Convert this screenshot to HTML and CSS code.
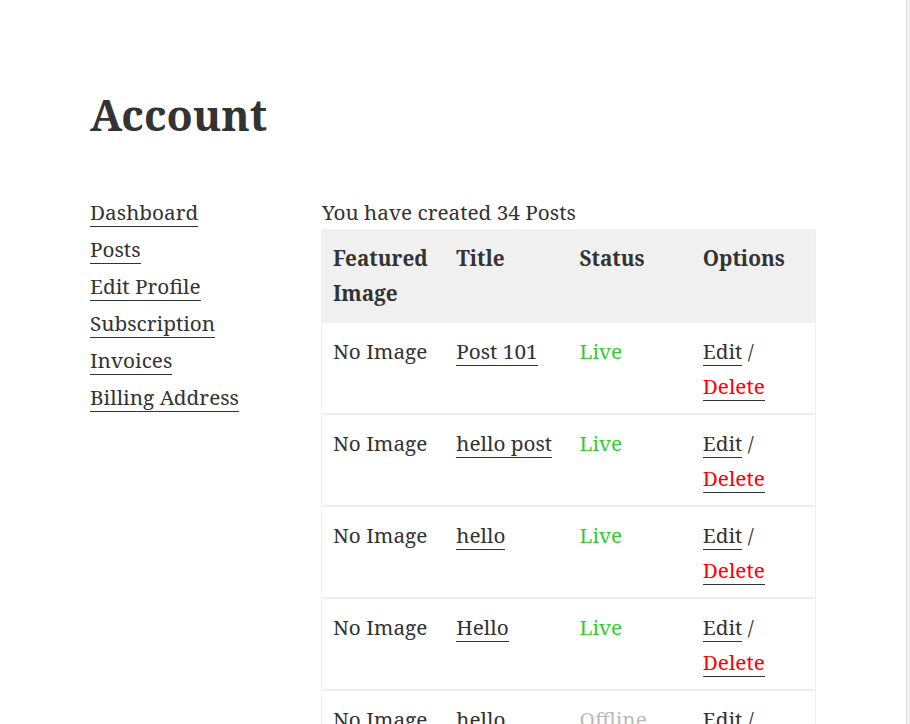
FILE: index.html
```html
<!DOCTYPE html>
<html lang="en">
<head>
  <meta charset="UTF-8">
  <title>Account</title>
  <link rel="stylesheet" href="styles.css">
</head>
<body>

  <div class="pagina">
    <h1 class="titulo">Account</h1>

    <div class="cuenta">
      <ul class="menu">
        <li><a href="#">Dashboard</a></li>
        <li><a href="#">Posts</a></li>
        <li><a href="#">Edit Profile</a></li>
        <li><a href="#">Subscription</a></li>
        <li><a href="#">Invoices</a></li>
        <li><a href="#">Billing Address</a></li>
      </ul>

      <div class="contenido">
        <p class="resumen">You have created 34 Posts</p>
        <table class="posts">
          <thead>
            <tr>
              <th>Featured Image</th>
              <th>Title</th>
              <th>Status</th>
              <th>Options</th>
            </tr>
          </thead>
          <tbody>
            <tr>
              <td>No Image</td>
              <td><a href="#">Post 101</a></td>
              <td class="live">Live</td>
              <td><a href="#">Edit</a> / <a href="#" class="borrar">Delete</a></td>
            </tr>
            <tr>
              <td>No Image</td>
              <td><a href="#">hello post</a></td>
              <td class="live">Live</td>
              <td><a href="#">Edit</a> / <a href="#" class="borrar">Delete</a></td>
            </tr>
            <tr>
              <td>No Image</td>
              <td><a href="#">hello</a></td>
              <td class="live">Live</td>
              <td><a href="#">Edit</a> / <a href="#" class="borrar">Delete</a></td>
            </tr>
            <tr>
              <td>No Image</td>
              <td><a href="#">Hello</a></td>
              <td class="live">Live</td>
              <td><a href="#">Edit</a> / <a href="#" class="borrar">Delete</a></td>
            </tr>
            <tr>
              <td>No Image</td>
              <td><a href="#">hello</a></td>
              <td class="offline">Offline</td>
              <td><a href="#">Edit</a> / <a href="#" class="borrar">Delete</a></td>
            </tr>
          </tbody>
        </table>
      </div>
    </div>
  </div>

</body>
</html>
```

FILE: styles.css
```css
html {
  background-color: #f1f1f1;
}
body {
  font-family: "Noto Serif", "DejaVu Serif", serif;
  font-size: 20.75px;
  line-height: 35px;
  color: #333;
  margin: 0;
  background-color: #fff;
  width: 906px;
  height: 724px;
  overflow: hidden;
  border-right: 1px solid #e0e0e0;
}
a {
  color: #333;
  text-decoration: none;
  border-bottom: 1px solid #333;
}
.pagina {
  padding: 84px 0 0 90px;
}
.titulo {
  font-size: 42.8px;
  line-height: 62px;
  margin: 0 0 49px;
}
.cuenta {
  display: flex;
}
.menu {
  list-style: none;
  margin: -1px 0 0;
  padding: 0;
  width: 231px;
  line-height: 37px;
}
.contenido {
  width: 495px;
}
.resumen {
  margin: 0;
  height: 34px;
  padding-left: 1px;
}
.posts {
  border-collapse: collapse;
  width: 495px;
  border-left: 1px solid #eeeeee;
  border-right: 1px solid #eeeeee;
}
.posts th,
.posts td {
  text-align: left;
  vertical-align: top;
  width: 100px;
  padding: 11px 12px 9px 11px;
  border-bottom: 2px solid #efefef;
}
.posts th {
  background-color: #f0f0f0;
  font-weight: bold;
  padding-top: 12px;
  padding-bottom: 12px;
  border-bottom: 0;
}
.live {
  color: #33cc33;
}
.offline {
  color: #bbbbbb;
}
.borrar {
  color: #ff0000;
}
```
